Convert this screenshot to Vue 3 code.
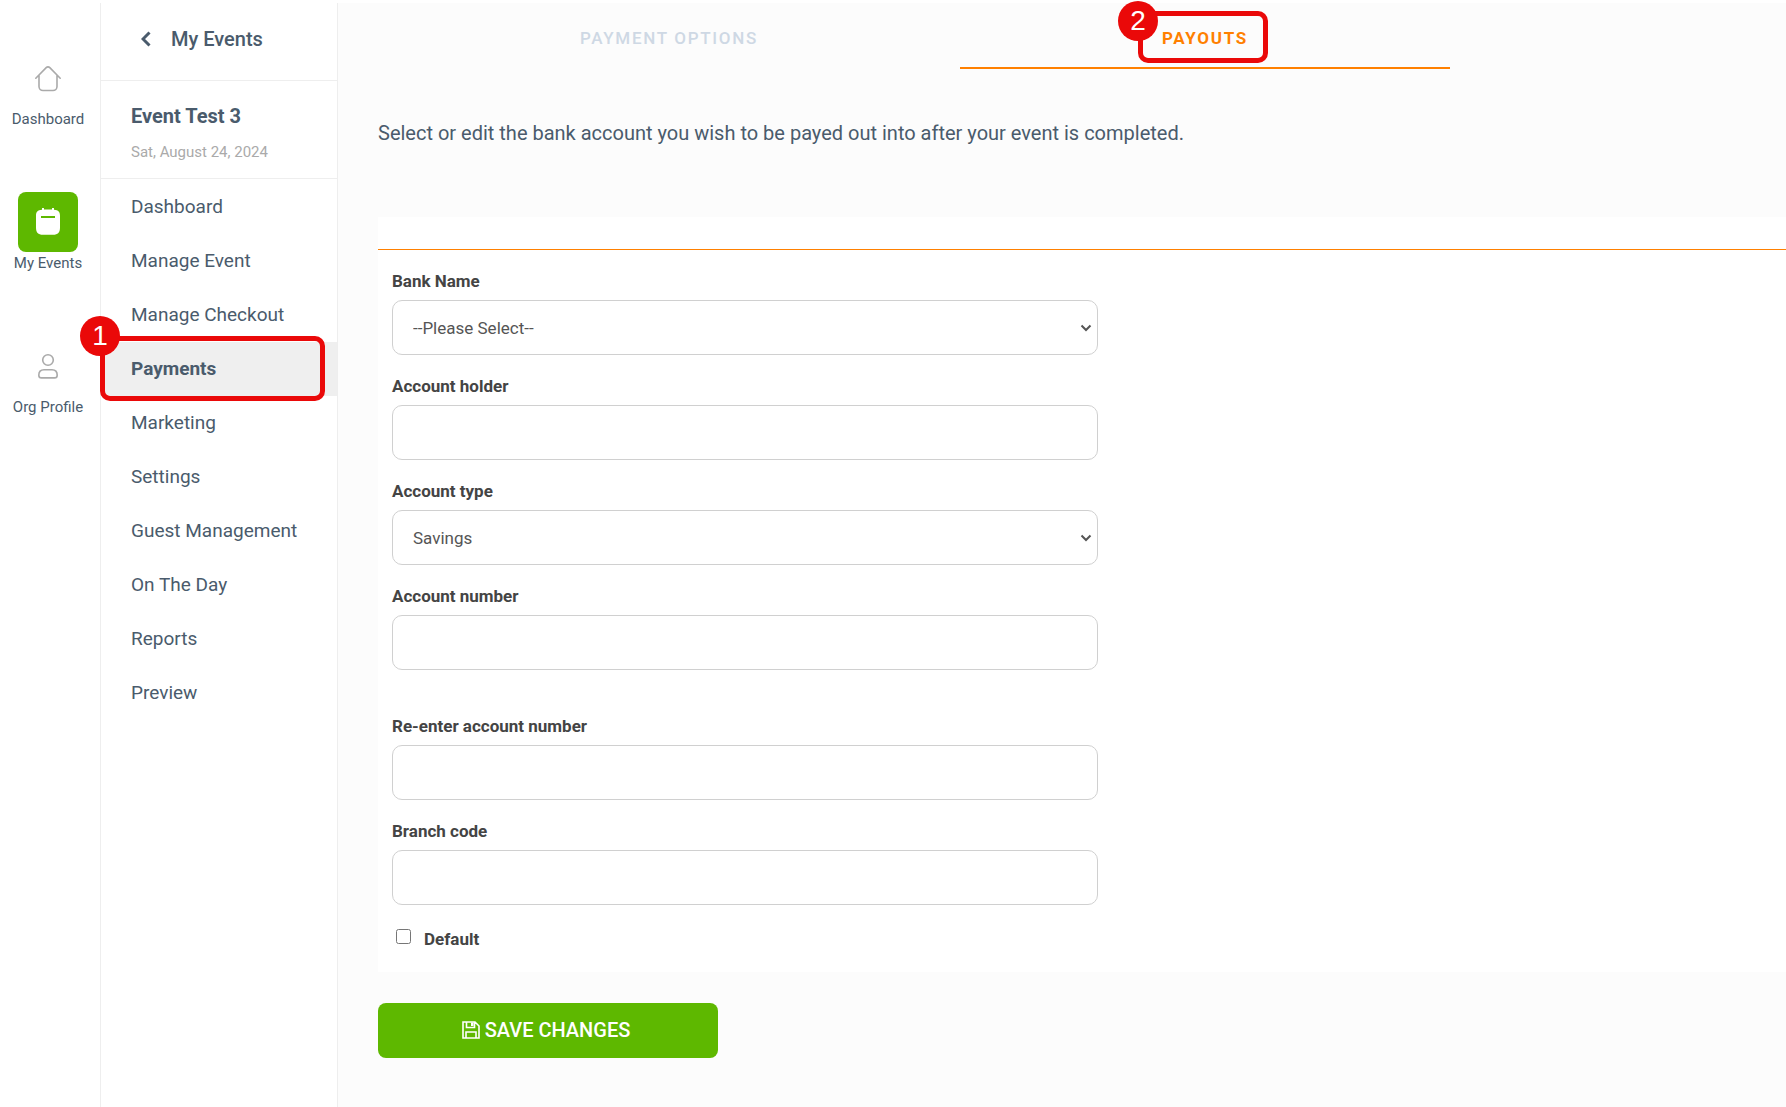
<template>
  <div class="page">
    <nav class="rail" aria-label="Main">
      <a v-for="item in railItems" :key="item.label" href="#" class="rail-item">
        <span class="rail-tile" :class="{ active: item.active }">
          <svg v-if="item.icon === 'home'" class="rail-icon" viewBox="0 0 28 28">
            <path d="M1.8 14.2 12.2 3.6a2.5 2.5 0 0 1 3.6 0L26.2 14.2M5 11.5V22.5a4 4 0 0 0 4 4H19a4 4 0 0 0 4-4V11.5" />
          </svg>
          <svg v-else-if="item.icon === 'calendar'" class="rail-icon" viewBox="0 0 28 28">
            <path class="solid" d="M8 0h2v1.6h8V0h2v1.8c4.5.4 6 2.2 6 6V19.500c0 5-2 7.300-7 7.300H9c-5 0-7-2.300-7-7.300V7.800c0-3.800 1.500-5.600 6-6z" />
            <path class="slot" d="M7 9h14" />
          </svg>
          <svg v-else class="rail-icon" viewBox="0 0 28 28">
            <circle cx="14" cy="8" r="5.3" />
            <path d="M10 17.7h8c3.4 0 5.2 2.2 5.2 5.5 0 1.8-1 2.7-2.7 2.7h-13c-1.7 0-2.7-.9-2.7-2.7 0-3.3 1.8-5.5 5.2-5.5z" />
          </svg>
        </span>
        <span class="rail-label">{{ item.label }}</span>
      </a>
    </nav>

    <aside class="sidebar">
      <a href="#" class="back">
        <svg class="chevron" viewBox="0 0 10 16"><path d="M8.5 1.5 2 8l6.500 6.500" /></svg>
        <span>My Events</span>
      </a>
      <div class="event">
        <h2>Event Test 3</h2>
        <p>Sat, August 24, 2024</p>
      </div>
      <ul class="menu">
        <li v-for="item in menuItems" :key="item" :class="{ current: item === currentItem }">
          <a href="#">{{ item }}</a>
          <span v-if="item === currentItem" class="marker marker-menu"><span class="marker-number">1</span></span>
        </li>
      </ul>
    </aside>

    <main class="content">
      <nav class="tabs" aria-label="Payments">
        <a href="#" class="tab">PAYMENT OPTIONS</a>
        <a href="#" class="tab active">
          <span class="tab-text">PAYOUTS<span class="marker marker-tab"><span class="marker-number">2</span></span></span>
        </a>
      </nav>

      <form class="payout" @submit.prevent>
        <p class="intro">Select or edit the bank account you wish to be payed out into after your event is completed.</p>

        <div class="card">
          <div class="card-head"></div>
          <div class="fields">
            <div class="field">
              <label for="bank">Bank Name</label>
              <div class="select-wrap">
                <select id="bank" v-model="form.bank">
                  <option value="">--Please Select--</option>
                </select>
                <svg class="caret" viewBox="0 0 12 8"><path d="M1.5 1.5 6 6l4.500-4.500" /></svg>
              </div>
            </div>
            <div class="field">
              <label for="holder">Account holder</label>
              <input id="holder" v-model="form.holder" type="text" />
            </div>
            <div class="field">
              <label for="type">Account type</label>
              <div class="select-wrap">
                <select id="type" v-model="form.type">
                  <option value="savings">Savings</option>
                </select>
                <svg class="caret" viewBox="0 0 12 8"><path d="M1.5 1.5 6 6l4.500-4.500" /></svg>
              </div>
            </div>
            <div class="field spaced">
              <label for="number">Account number</label>
              <input id="number" v-model="form.number" type="text" />
            </div>
            <div class="field">
              <label for="number-again">Re-enter account number</label>
              <input id="number-again" v-model="form.numberAgain" type="text" />
            </div>
            <div class="field">
              <label for="branch">Branch code</label>
              <input id="branch" v-model="form.branch" type="text" />
            </div>
            <div class="check">
              <input id="default" v-model="form.isDefault" type="checkbox" />
              <label for="default">Default</label>
            </div>
          </div>
        </div>

        <button type="submit" class="save">
          <svg class="disk" viewBox="0 0 18 18">
            <path d="M1 1h12l4 4v12H1zM4.500 1v5.500h8V1M4 17v-6h10v6" />
            <path class="disk-tab" d="M9 1.500h2.500v3.500H9z" />
          </svg>
          <span>SAVE CHANGES</span>
        </button>
      </form>
    </main>
  </div>
</template>

<script setup>
import { reactive, ref } from 'vue'

const railItems = [
  { label: 'Dashboard', icon: 'home' },
  { label: 'My Events', icon: 'calendar', active: true },
  { label: 'Org Profile', icon: 'person' },
]

const menuItems = [
  'Dashboard',
  'Manage Event',
  'Manage Checkout',
  'Payments',
  'Marketing',
  'Settings',
  'Guest Management',
  'On The Day',
  'Reports',
  'Preview',
]

const currentItem = ref('Payments')

const form = reactive({
  bank: '',
  holder: '',
  type: 'savings',
  number: '',
  numberAgain: '',
  branch: '',
  isDefault: false,
})
</script>

<style>
body {
  margin: 0;
  background: #fff;
}
</style>

<style scoped>
.page {
  display: flex;
  box-sizing: border-box;
  min-height: 100vh;
  padding-top: 3px;
  font-family: Roboto, "Liberation Sans", sans-serif;
  color: #4a5b6c;
}

a {
  color: inherit;
  text-decoration: none;
}

/* icon rail */
.rail {
  display: flex;
  flex: none;
  flex-direction: column;
  gap: 62px;
  box-sizing: border-box;
  width: 101px;
  padding: 45px 4px 0 0;
  border-right: 1px solid #eee;
}

.rail-item {
  display: flex;
  flex-direction: column;
  align-items: center;
}

.rail-tile {
  display: flex;
  align-items: center;
  justify-content: center;
  width: 60px;
  height: 60px;
  border-radius: 8px;
}

.rail-tile.active {
  background: #5eb800;
}

.rail-icon {
  width: 28px;
  height: 28px;
  fill: none;
  stroke: #aaa;
  stroke-width: 1.6;
  stroke-linecap: round;
}

.rail-icon .solid {
  fill: #fff;
  stroke: none;
}

.rail-icon .slot {
  stroke: #5eb800;
  stroke-width: 2;
  stroke-linecap: butt;
}

.rail-label {
  font-size: 15px;
  line-height: 22px;
}

/* event sidebar */
.sidebar {
  flex: none;
  box-sizing: border-box;
  width: 237px;
  border-right: 1px solid #eee;
}

.back {
  display: flex;
  align-items: center;
  gap: 20px;
  box-sizing: border-box;
  height: 78px;
  padding: 0 0 5px 40px;
  border-bottom: 1px solid #eee;
  font-size: 20px;
  font-weight: 500;
}

.chevron {
  width: 10px;
  height: 16px;
  fill: none;
  stroke: currentColor;
  stroke-width: 3;
}

.event {
  padding: 23px 30px 14px;
  border-bottom: 1px solid #eee;
}

.event h2 {
  margin: 0 0 12px;
  font-size: 20px;
  font-weight: 700;
  line-height: 24px;
}

.event p {
  margin: 0;
  font-size: 15px;
  line-height: 24px;
  color: #aaa;
}

.menu {
  margin: 0;
  padding: 1px 0 0;
  list-style: none;
}

.menu li {
  position: relative;
}

.menu a {
  display: block;
  padding: 0 30px;
  font-size: 19px;
  line-height: 54px;
}

.menu .current {
  background: #efefef;
  font-weight: 700;
}

/* numbered highlight frames */
.marker {
  position: absolute;
  box-sizing: border-box;
  border: 5px solid #ea0909;
  border-radius: 10px;
  pointer-events: none;
}

.marker-menu {
  inset: -6px 12px -5px -1px;
}

.marker-tab {
  inset: -14px -20px -12px -24px;
}

.marker-number {
  position: absolute;
  top: -25px;
  left: -25px;
  width: 40px;
  height: 40px;
  border-radius: 50%;
  background: #ea0909;
  color: #fff;
  font-family: "Liberation Sans", Arial, sans-serif;
  font-size: 28px;
  font-weight: 400;
  line-height: 40px;
  letter-spacing: 0;
  text-align: center;
}

.marker-tab .marker-number {
  top: -15px;
}

/* page content */
.content {
  flex: 1;
  min-width: 0;
  background: #fcfcfc;
}

.tabs {
  display: flex;
  gap: 46px;
  padding: 0 336px 0 86px;
}

.tab {
  flex: 1;
  padding: 22px 0 16px;
  border-bottom: 2px solid transparent;
  color: #ced8e4;
  font-size: 17px;
  font-weight: 500;
  line-height: 26px;
  letter-spacing: 0.1em;
  text-align: center;
}

.tab.active {
  border-color: #ff8000;
  color: #ff8000;
  font-weight: 700;
}

.tab-text {
  display: inline-block;
  position: relative;
}

.payout {
  padding: 51px 0 49px 40px;
}

.intro {
  margin: 0;
  font-size: 20px;
  line-height: 26px;
}

.card {
  margin: 71px 0 31px;
  background: #fff;
}

.card-head {
  height: 32px;
  border-bottom: 1px solid #ff8000;
}

.fields {
  box-sizing: border-box;
  max-width: 734px;
  padding: 21px 14px 23px;
  color: #444;
}

.field {
  margin-bottom: 21px;
}

.field.spaced {
  margin-bottom: 46px;
}

.field label,
.check label {
  display: block;
  font-size: 17px;
  font-weight: 700;
  line-height: 20px;
}

.field label {
  margin-bottom: 9px;
}

.field input,
.field select {
  display: block;
  box-sizing: border-box;
  width: 100%;
  height: 55px;
  padding: 0 20px;
  border: 1px solid #d0d0d0;
  border-radius: 10px;
  background: #fff;
  color: #555;
  font-family: inherit;
  font-size: 17px;
}

.field select {
  appearance: none;
}

.select-wrap {
  position: relative;
}

.caret {
  position: absolute;
  top: 24px;
  right: 6px;
  width: 12px;
  height: 8px;
  fill: none;
  stroke: #555;
  stroke-width: 2;
  pointer-events: none;
}

.check {
  display: flex;
  gap: 13px;
  padding: 3px 0 0 4px;
}

.check input {
  width: 15px;
  height: 15px;
  margin: 0;
}

.save {
  display: flex;
  align-items: center;
  justify-content: center;
  gap: 5px;
  width: 340px;
  height: 55px;
  padding: 0 4px 2px 0;
  border: 0;
  border-radius: 8px;
  background: #5eb800;
  color: #fff;
  font-family: inherit;
  font-size: 20px;
  font-weight: 500;
}

.disk {
  width: 18px;
  height: 18px;
  fill: none;
  stroke: #fff;
  stroke-width: 1.6;
}

.disk .disk-tab {
  fill: #fff;
  stroke: none;
}
</style>
